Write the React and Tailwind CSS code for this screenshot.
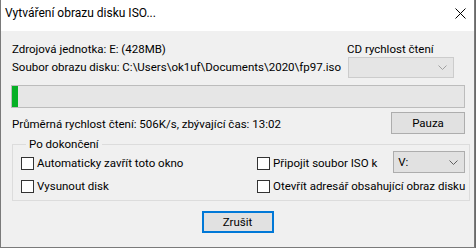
function Check() {
  return <div className="w-[13px] h-[13px] border border-[#333333] bg-white shrink-0" />;
}

function Chevron({ color }) {
  return (
    <svg width="9" height="5" viewBox="0 0 9 5" className="shrink-0">
      <path d="M0.5 0.5 L4.5 4.5 L8.5 0.5" fill="none" stroke={color} strokeWidth="1" />
    </svg>
  );
}

export default function App() {
  return (
    <div className="w-[476px] h-[248px] bg-[#6a6a6a] flex font-['Roboto',sans-serif] text-[11.5px] leading-[18px] text-black whitespace-nowrap">
      <div className="w-[475px] h-[248px] border-l border-r border-b border-[#7a7a7a] flex flex-col">
        {/* title bar */}
        <div className="h-[31px] bg-white flex items-start justify-between pl-[4px] pr-[8px] pt-[4px] shrink-0">
          <span className="text-[12px]">Vytváření obrazu disku ISO...</span>
          <svg width="11" height="11" viewBox="0 0 11 11" className="mt-[4px]">
            <path d="M0.5 0.5 L10.5 10.5 M10.5 0.5 L0.5 10.5" stroke="#000" strokeWidth="1" />
          </svg>
        </div>
        {/* body */}
        <div className="flex-1 bg-[#f0f0f0] flex flex-col pl-[10px] pr-[9px] pt-[9px]">
          <div className="flex">
            <div className="flex-1 pl-[1px] flex flex-col">
              <span>Zdrojová jednotka: E: (428MB)</span>
              <span>Soubor obrazu disku: C:\Users\ok1uf\Documents\2020\fp97.iso</span>
            </div>
            <div className="w-[106px] mr-[11px] flex flex-col">
              <span className="-ml-[1px]">CD rychlost čtení</span>
              <div className="h-[21px] border border-[#cccccc] bg-[#e5e5e5] flex items-center justify-end pr-[6px] -mt-[1px]">
                <Chevron color="#a0a0a0" />
              </div>
            </div>
          </div>
          <div className="mt-[7px] h-[23px] border border-[#bcbcbc] bg-[#e6e6e6] flex">
            <div className="w-[6px] h-full bg-[#06b025]" />
          </div>
          <div className="mt-[4px] flex items-center">
            <span className="flex-1 pl-[1px] pt-[2px]">Průměrná rychlost čtení: 506K/s, zbývající čas: 13:02</span>
            <div className="w-[74px] h-[22px] border border-[#adadad] bg-[#e1e1e1] flex items-center justify-center">
              Pauza
            </div>
          </div>
          <fieldset className="mt-[1px] ml-[1px] border border-[#dcdcdc] pl-[8px] pr-[4px] pb-[5px]">
            <legend className="ml-[5px] px-[3px]">Po dokončení</legend>
            <div className="flex flex-col gap-[5px] pt-[1px]">
              <div className="flex h-[18px] items-center">
                <div className="w-[236px] flex items-center">
                  <Check />
                  <span className="ml-[3px]">Automaticky zavřít toto okno</span>
                </div>
                <div className="flex-1 flex items-center">
                  <Check />
                  <span className="ml-[3px]">Připojit soubor ISO k</span>
                  <div className="ml-auto w-[72px] h-[22px] border border-[#adadad] bg-[#e1e1e1] flex items-center justify-between pl-[4px] pr-[6px] mb-[2px]">
                    <span>V:</span>
                    <Chevron color="#606060" />
                  </div>
                </div>
              </div>
              <div className="flex h-[18px] items-center">
                <div className="w-[236px] flex items-center">
                  <Check />
                  <span className="ml-[3px]">Vysunout disk</span>
                </div>
                <div className="flex-1 flex items-center">
                  <Check />
                  <span className="ml-[3px]">Otevřít adresář obsahující obraz disku</span>
                </div>
              </div>
            </div>
          </fieldset>
          <div className="mt-[10px] flex justify-center pr-[1px]">
            <div className="w-[72px] h-[22px] border-2 border-[#0078d7] bg-[#e1e1e1] flex items-center justify-center">
              Zrušit
            </div>
          </div>
        </div>
      </div>
    </div>
  );
}
